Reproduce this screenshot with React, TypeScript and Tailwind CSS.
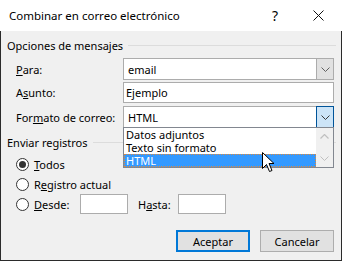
import React from 'react';

const font = { fontFamily: '"Noto Sans", "Segoe UI", sans-serif' };

const Chevron = ({ color = '#606060' }: { color?: string }) => (
  <svg width="9" height="5" viewBox="0 0 9 5">
    <path d="M0.5 0.5 L4.5 4.5 L8.5 0.5" fill="none" stroke={color} strokeWidth="1" />
  </svg>
);

const GroupHeading = ({ text }: { text: string }) => (
  <div className="flex items-center h-[16px] pl-[6px] pr-[5px]">
    <span>{text}</span>
    <div className="flex-1 h-px bg-[#dcdcdc] ml-[5px]" />
  </div>
);

const Radio = ({ checked }: { checked?: boolean }) => (
  <div className="w-[13px] h-[13px] rounded-full border border-[#333] bg-white flex items-center justify-center shrink-0">
    {checked && <div className="w-[7px] h-[7px] rounded-full bg-[#333]" />}
  </div>
);

const FieldRow = ({ label, children, h }: { label: React.ReactNode; children: React.ReactNode; h: string }) => (
  <div className={`flex items-center ${h}`}>
    <div className="w-[122px] pl-[15px] shrink-0 whitespace-nowrap">{label}</div>
    <div className="w-[211px] h-full">{children}</div>
  </div>
);

export default function App() {
  return (
    <div className="w-[342px] h-[261px] flex flex-col text-[11px] text-black leading-none" style={font}>
      {/* title bar */}
      <div className="h-[31px] bg-white flex items-center shrink-0">
        <span className="ml-[9px] text-[11.5px]">Combinar en correo electrónico</span>
        <span className="ml-auto text-[14px] mr-[35px]">?</span>
        <svg width="11" height="11" viewBox="0 0 11 11" className="mr-[18px]">
          <path d="M0.5 0.5 L10.5 10.5 M10.5 0.5 L0.5 10.5" stroke="#111" strokeWidth="1" />
        </svg>
      </div>

      {/* body */}
      <div className="relative flex-1 bg-[#f0f0f0] border-l border-r border-b border-[#2b2b2b] flex flex-col">
        <div className="mt-[6px]">
          <GroupHeading text="Opciones de mensajes" />
        </div>

        <div className="mt-[5px]">
          <FieldRow h="h-[22px]" label={<span><u>P</u>ara:</span>}>
            <div className="h-full flex border border-[#acacac] bg-white">
              <div className="flex-1 flex items-center pl-[4px]">email</div>
              <div className="w-[17px] bg-[#e1e1e1] border-l border-[#acacac] flex items-center justify-center">
                <Chevron />
              </div>
            </div>
          </FieldRow>
        </div>

        <div className="mt-[2px]">
          <FieldRow h="h-[21px]" label={<span>A<u>s</u>unto:</span>}>
            <div className="h-full flex items-center border border-[#acacac] bg-white pl-[2px]">Ejemplo</div>
          </FieldRow>
        </div>

        <div className="mt-[3px]">
          <FieldRow h="h-[22px]" label={<span>For<u>m</u>ato de correo:</span>}>
            <div className="h-full flex border border-[#acacac] bg-white">
              <div className="flex-1 flex items-center pl-[4px]">HTML</div>
              <div className="w-[18px] -my-px -mr-px bg-[#cce4f7] border border-[#005499] flex items-center justify-center">
                <Chevron color="#3a3a3a" />
              </div>
            </div>
          </FieldRow>
        </div>

        <div className="mt-[6px]">
          <GroupHeading text="Enviar registros" />
        </div>

        <div className="mt-[6px] flex items-center h-[16px] pl-[15px] gap-[5px]">
          <Radio checked />
          <span><u>T</u>odos</span>
        </div>
        <div className="mt-[4px] flex items-center h-[16px] pl-[15px] gap-[5px]">
          <Radio />
          <span>R<u>e</u>gistro actual</span>
        </div>
        <div className="mt-[2px] flex items-center h-[20px] pl-[15px]">
          <Radio />
          <span className="ml-[5px] w-[46px]"><u>D</u>esde:</span>
          <div className="w-[48px] h-full border border-[#acacac] bg-white" />
          <span className="ml-[10px] w-[40px]">H<u>a</u>sta:</span>
          <div className="w-[48px] h-full border border-[#acacac] bg-white" />
        </div>

        <div className="mt-[16px] flex justify-end gap-[10px] pr-[7px]">
          <button className="w-[74px] h-[22px] bg-[#e1e1e1] border-2 border-[#0078d7] flex items-center justify-center">
            Aceptar
          </button>
          <button className="w-[74px] h-[22px] bg-[#e1e1e1] border border-[#adadad] flex items-center justify-center">
            Cancelar
          </button>
        </div>

        {/* open dropdown list */}
        <div className="absolute left-[122px] top-[96px] w-[211px] h-[41px] border border-[#828790] bg-white flex">
          <div className="flex-1 flex flex-col">
            <div className="h-[13px] flex items-center pl-[2px]">Datos adjuntos</div>
            <div className="h-[13px] flex items-center pl-[2px]">Texto sin formato</div>
            <div className="h-[13px] flex items-center pl-[1px] bg-[#3399ff] text-white border border-dotted border-[#e08a3c]">
              HTML
            </div>
          </div>
          <div className="w-[17px] bg-[#f0f0f0] flex flex-col items-center justify-between py-[6px]">
            <svg width="9" height="5" viewBox="0 0 9 5">
              <path d="M0.5 4.5 L4.5 0.5 L8.5 4.5" fill="none" stroke="#c0c0c0" strokeWidth="1.2" />
            </svg>
            <Chevron color="#c0c0c0" />
          </div>
        </div>

        {/* mouse cursor */}
        <svg className="absolute left-[261px] top-[121px]" width="13" height="21" viewBox="0 0 13 21">
          <path
            d="M0.5 0.5 L0.5 16.5 L4.5 12.5 L7.5 19.5 L10 18.5 L7 11.5 L12 11.5 Z"
            fill="white"
            stroke="black"
            strokeWidth="1"
            strokeLinejoin="round"
          />
        </svg>
      </div>
    </div>
  );
}
